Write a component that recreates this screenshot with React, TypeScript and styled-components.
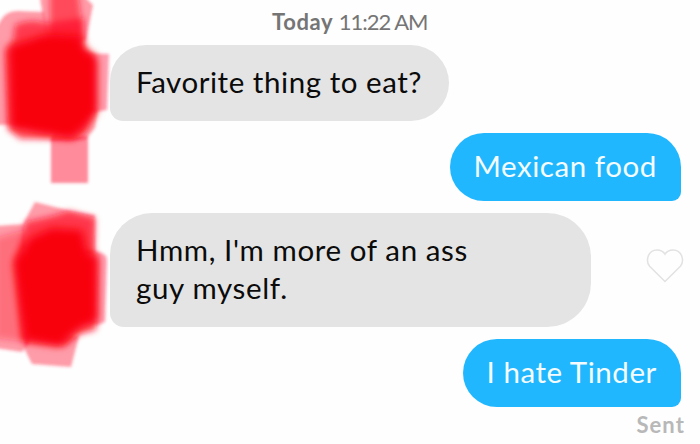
import React from "react";
import styled, { createGlobalStyle } from "styled-components";

const Global = createGlobalStyle`
  * { box-sizing: border-box; }
  body { margin: 0; background: #fefefe; font-family: Lato, "Open Sans", sans-serif; overflow: hidden; }
`;
const Screen = styled.main`
  display: grid;
  grid-template-columns: 109.5px 1fr;
  width: 700px;
  height: 444px;
  overflow: hidden;
`;
const Avatars = styled.aside`
  display: flex;
  flex-direction: column;
`;
const Scribble = styled.svg<{ $h: number }>`
  display: block;
  flex: none;
  width: 130px;
  height: ${(p) => p.$h}px;
`;
const Thread = styled.section`
  display: flex;
  flex-direction: column;
  gap: 11.5px;
  position: relative;
`;
const Time = styled.header`
  height: 33px;
  padding: 9px 0 0 162.5px;
  font-size: 22px;
  line-height: 26px;
  color: #757575;
  white-space: nowrap;
`;
const Track = styled.span<{ $ls: number; $bold?: boolean }>`
  letter-spacing: ${(p) => p.$ls}px;
  font-weight: ${(p) => (p.$bold ? 700 : 400)};
`;
const Row = styled.div<{ $mine?: boolean }>`
  display: flex;
  align-items: center;
  justify-content: ${(p) => (p.$mine ? "flex-end" : "space-between")};
  padding-right: ${(p) => (p.$mine ? 19.5 : 16)}px;
`;
const Bubble = styled.div<{ $w: number; $h: number; $r: string; $mine?: boolean }>`
  display: flex;
  flex-direction: column;
  justify-content: center;
  width: ${(p) => p.$w}px;
  height: ${(p) => p.$h}px;
  padding-left: ${(p) => (p.$mine ? 23.5 : 26.5)}px;
  padding-bottom: 2px;
  border-radius: ${(p) => p.$r};
  background: ${(p) => (p.$mine ? "#21b7ff" : "#e4e4e4")};
  color: ${(p) => (p.$mine ? "#f4fcff" : "#0b0b0b")};
  font-size: 29.5px;
  line-height: 38px;
  white-space: nowrap;
`;
const Heart = styled.svg`
  width: 38px;
  height: 36px;
  margin-top: -8px;
`;
const Status = styled.footer`
  align-self: flex-end;
  margin-top: -7px;
  padding-right: 15px;
  font-size: 22px;
  line-height: 26px;
  color: #b8b8b8;
`;

export default function App() {
  return (
    <>
      <Global />
      <Screen>
        <Avatars>
          <Scribble $h={195} viewBox="0 0 130 195">
            <defs>
              <filter id="soft" x="-20%" y="-20%" width="140%" height="140%">
                <feGaussianBlur stdDeviation="1.7" />
              </filter>
              <filter id="mid" x="-20%" y="-20%" width="140%" height="140%">
                <feGaussianBlur stdDeviation="3" />
              </filter>
              <filter id="wide" x="-20%" y="-20%" width="140%" height="140%">
                <feGaussianBlur stdDeviation="4.5" />
              </filter>
            </defs>
            <g filter="url(#soft)" fill="#ff2040">
              <path d="M39-8H80L93 5 86 40 48 48Z" opacity=".45" />
              <path d="M1 20Q6 11 18 11L44 12 48 50 44 124-5 125V30Z" opacity=".45" />
              <path d="M70 50Q90 54 109 54L107 110 94 112 70 120Z" opacity=".42" />
              <path d="M70 100L98 110 95 128 85 140 50 141Z" opacity=".4" />
              <path d="M51 136H88V183H51Z" opacity=".52" />
            </g>
            <g filter="url(#mid)" fill="#ff1228">
              <path d="M50-8H78L84 40 70 60H50Z" opacity=".6" />
              <path d="M15 25Q30 18 46 23L84 18 84 48 94 56V112L86 132Q76 143 60 139L20 139 8 129 5 50 13 42Z" opacity=".7" />
            </g>
            <path d="M10 46L46 34 80 36 85 49 97 58V110L86 126 72 138 42 134 11 128 9 52Z" fill="#f90008" filter="url(#wide)" />
          </Scribble>
          <Scribble $h={190} viewBox="0 195 130 190">
            <g filter="url(#soft)" fill="#ff2040">
              <path d="M35 202L71 211 95 215 95 252 80 260 22 250 24 222Z" opacity=".45" />
              <path d="M-5 226L24 224 30 342 22 352-5 348Z" opacity=".45" />
              <path d="M80 249L98 252Q108 254 107 262L105 322 97 325 80 320Z" opacity=".42" />
              <path d="M24 335L79 336 71 367 32 364 25 350Z" opacity=".45" />
            </g>
            <g filter="url(#mid)" fill="#ff1228">
              <path d="M-5 238L22 230 26 342-5 338Z" opacity=".35" />
              <path d="M26 222L52 216 69 211 95 218 94 251 98 256 96 330 79 334 65 346 22 342 15 260Z" opacity=".72" />
            </g>
            <path d="M30 238L52 228 82 230 87 252 97 258 97 320 78 330 60 346 24 340 14 262Z" fill="#f90008" filter="url(#wide)" />
          </Scribble>
        </Avatars>
        <Thread>
          <Time>
            <Track $bold $ls={0.6}>Today</Track> <Track $ls={-1}>11:22 AM</Track>
          </Time>
          <Row>
            <Bubble $w={339.5} $h={76.5} $r="36px 38px 38px 13px">
              <Track $ls={0.55}>Favorite thing to eat?</Track>
            </Bubble>
          </Row>
          <Row $mine>
            <Bubble $mine $w={230.5} $h={68.5} $r="34px 34px 9px 34px">
              <Track $ls={0.55}>Mexican food</Track>
            </Bubble>
          </Row>
          <Row>
            <Bubble $w={481.5} $h={114.5} $r="42px 44px 44px 14px">
              <Track $ls={0.6}>Hmm, I'm more of an ass</Track>
              <Track $ls={0.65}>guy myself.</Track>
            </Bubble>
            <Heart viewBox="0 0 38 36" fill="none" stroke="#e2e2e2" strokeWidth="1.5">
              <path d="M19 33.5L3.6 18.2C-.8 12.8 2 2 11 2Q16.5 2 19 6.2Q21.5 2 27 2C36 2 38.8 12.8 34.4 18.2Z" />
            </Heart>
          </Row>
          <Row $mine>
            <Bubble $mine $w={217.5} $h={68.5} $r="34px 34px 9px 34px">
              <Track $ls={0.55}>I hate Tinder</Track>
            </Bubble>
          </Row>
          <Status>
            <Track $bold $ls={1.1}>Sent</Track>
          </Status>
        </Thread>
      </Screen>
    </>
  );
}
